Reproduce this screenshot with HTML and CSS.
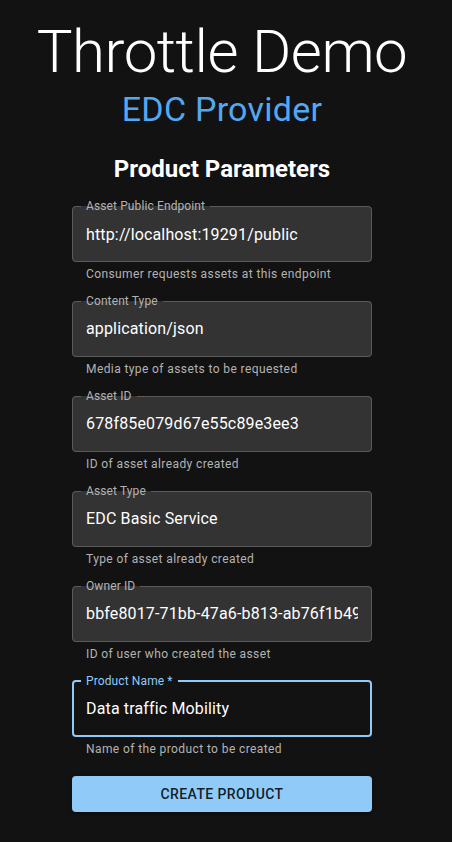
FILE: index.html
```html
<!DOCTYPE html>
<html lang="en">
<head>
<meta charset="utf-8">
<title>Throttle Demo</title>
<link rel="stylesheet" href="styles.css">
</head>
<body>
<main class="page">
  <h1 class="title">Throttle Demo</h1>
  <h2 class="subtitle">EDC Provider</h2>
  <h3 class="section">Product Parameters</h3>
  <form class="form">
    <div class="field">
      <div class="input-root">
        <div class="value"><span class="value-text">http://localhost:19291/public</span></div>
        <fieldset class="outline"><legend class="label">Asset Public Endpoint</legend></fieldset>
      </div>
      <p class="helper">Consumer requests assets at this endpoint</p>
    </div>
    <div class="field">
      <div class="input-root">
        <div class="value"><span class="value-text">application/json</span></div>
        <fieldset class="outline"><legend class="label">Content Type</legend></fieldset>
      </div>
      <p class="helper">Media type of assets to be requested</p>
    </div>
    <div class="field">
      <div class="input-root">
        <div class="value"><span class="value-text">678f85e079d67e55c89e3ee3</span></div>
        <fieldset class="outline"><legend class="label">Asset ID</legend></fieldset>
      </div>
      <p class="helper">ID of asset already created</p>
    </div>
    <div class="field">
      <div class="input-root">
        <div class="value"><span class="value-text">EDC Basic Service</span></div>
        <fieldset class="outline"><legend class="label">Asset Type</legend></fieldset>
      </div>
      <p class="helper">Type of asset already created</p>
    </div>
    <div class="field">
      <div class="input-root">
        <div class="value"><span class="value-text">bbfe8017-71bb-47a6-b813-ab76f1b49c2a</span></div>
        <fieldset class="outline"><legend class="label">Owner ID</legend></fieldset>
      </div>
      <p class="helper">ID of user who created the asset</p>
    </div>
    <div class="field field-focused">
      <div class="input-root">
        <div class="value"><span class="value-text">Data traffic Mobility</span></div>
        <fieldset class="outline"><legend class="label">Product Name *</legend></fieldset>
      </div>
      <p class="helper">Name of the product to be created</p>
    </div>
    <button type="button" class="submit">Create Product</button>
  </form>
</main>
</body>
</html>
```

FILE: styles.css
```css
* { box-sizing: border-box; }

html, body {
  margin: 0;
  padding: 0;
  background: #121212;
}

body {
  font-family: Roboto, "Noto Sans", "Liberation Sans", sans-serif;
  color: #fff;
}

.page {
  width: 444px;
  display: flex;
  flex-direction: column;
  align-items: center;
  padding-top: 16px;
  padding-bottom: 30px;
}

.title {
  margin: 0;
  font-size: 60px;
  font-weight: 300;
  line-height: 72px;
  letter-spacing: -0.00833em;
}

.subtitle {
  margin: 0;
  font-size: 34px;
  font-weight: 400;
  line-height: 42px;
  letter-spacing: 0.00735em;
  color: #53a8f2;
}

.section {
  margin: 23px 0 0;
  font-size: 24px;
  font-weight: 700;
  line-height: 32px;
}

.form {
  width: 300px;
  margin-top: 21px;
  display: flex;
  flex-direction: column;
}

.field {
  margin-bottom: 16px;
}

.input-root {
  position: relative;
  height: 56px;
  background: #333333;
  border-radius: 4px;
}

.value {
  padding: 16.5px 14px;
  font-size: 16px;
  line-height: 23px;
  letter-spacing: 0.00938em;
  color: #fff;
}

.value-text {
  display: block;
  white-space: nowrap;
  overflow: hidden;
}

.outline {
  position: absolute;
  top: -5px;
  left: 0;
  right: 0;
  bottom: 0;
  margin: 0;
  padding: 0 8px;
  border: 1px solid #5b5b5b;
  border-radius: 4px;
  pointer-events: none;
  min-width: 0;
}

.label {
  padding: 0 5px;
  font-size: 12px;
  line-height: 11px;
  letter-spacing: 0.00938em;
  color: #b3b3b3;
  white-space: nowrap;
}

.helper {
  margin: 3px 14px 0;
  font-size: 12px;
  line-height: 19.92px;
  letter-spacing: 0.03333em;
  color: #b3b3b3;
}

.field-focused .input-root {
  background: transparent;
}

.field-focused .outline {
  border: 2px solid #90caf9;
  padding: 0 7px;
}

.field-focused .label {
  color: #90caf9;
}

.submit {
  height: 36px;
  margin-top: 0;
  border: 0;
  border-radius: 4px;
  background: #90caf9;
  color: rgba(0, 0, 0, 0.87);
  font-family: Roboto, "Noto Sans", "Liberation Sans", sans-serif;
  font-size: 14px;
  font-weight: 500;
  letter-spacing: 0.02857em;
  text-transform: uppercase;
  box-shadow: 0 3px 1px -2px rgba(0,0,0,0.2), 0 2px 2px 0 rgba(0,0,0,0.14), 0 1px 5px 0 rgba(0,0,0,0.12);
}
```
